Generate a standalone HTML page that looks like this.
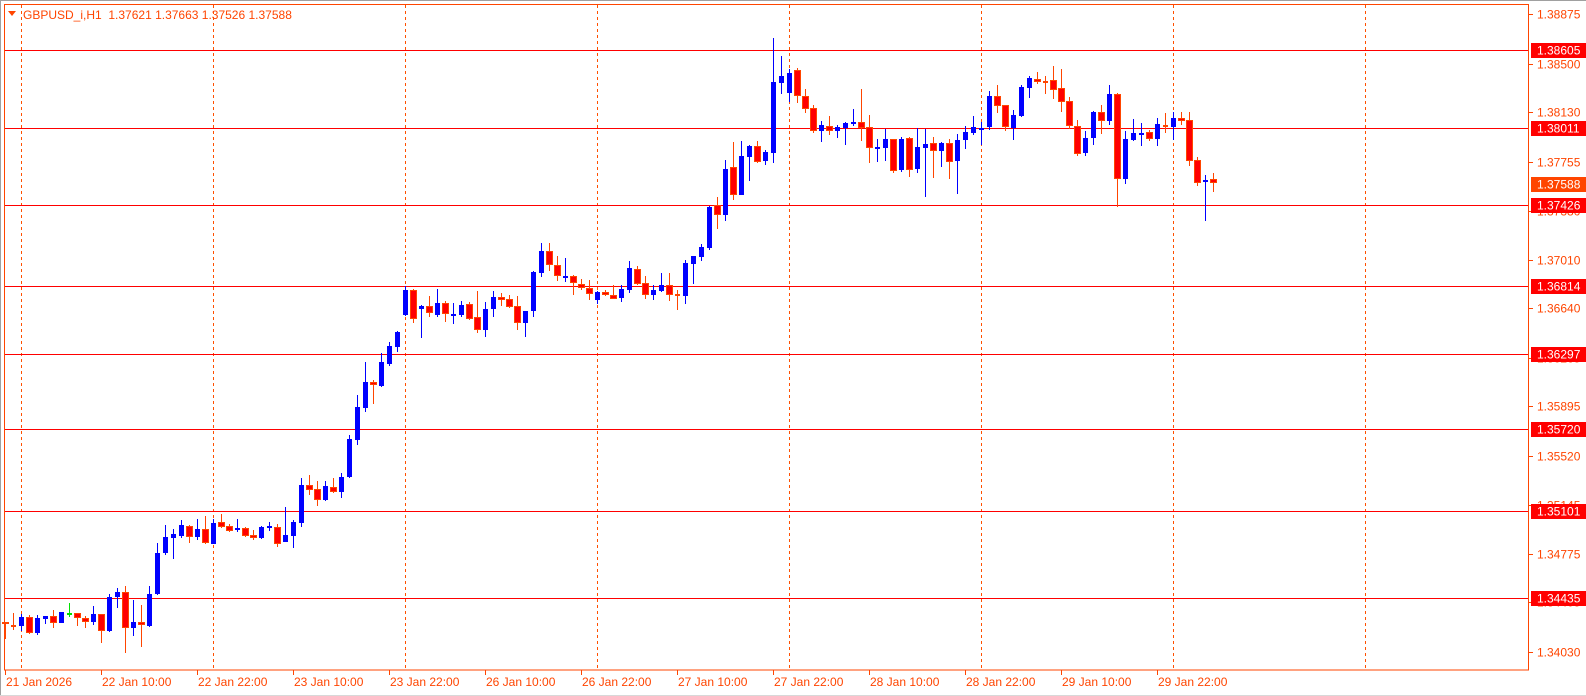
<!DOCTYPE html>
<html><head><meta charset="utf-8">
<style>
html,body{margin:0;padding:0;background:#fff;}
body{width:1586px;height:696px;overflow:hidden;position:relative;font-family:"Liberation Sans",sans-serif;}
svg{position:absolute;left:0;top:0;}
</style></head>
<body>
<svg id="s" width="1586" height="696" xmlns="http://www.w3.org/2000/svg" font-family="Liberation Sans, sans-serif">
<rect x="0" y="0" width="1586" height="696" fill="#fff"/>
<line x1="0" y1="0.5" x2="1586" y2="0.5" stroke="#a0a0a0"/>
<line x1="0.5" y1="0" x2="0.5" y2="696" stroke="#a0a0a0"/>
<line x1="0" y1="695.5" x2="1586" y2="695.5" stroke="#d8d8d8"/>
<g id="grid" stroke="#ff5000" stroke-dasharray="3,3" stroke-width="1"></g>
<g id="hl" stroke="#ff0000" stroke-width="1"></g>
<g id="c"></g>
<rect x="4.5" y="4.5" width="1524" height="665.5" fill="none" stroke="#ff4500" stroke-width="1"/>
<polygon points="8,11 16,11 12,16" fill="#ff4500"/>
<text x="23" y="19" font-size="12" fill="#ff4500" style="white-space:pre">GBPUSD_i,H1  1.37621 1.37663 1.37526 1.37588</text>
<g id="ax" font-size="12" fill="#ff4500"></g>
</svg>
<script>
var NS="http://www.w3.org/2000/svg";
function el(p,t,a,txt){var e=document.createElementNS(NS,t);for(var k in a)e.setAttribute(k,a[k]);if(txt!=null)e.textContent=txt;document.getElementById(p).appendChild(e);return e;}
[21,213,405,597,789,981,1173,1365].forEach(function(x){el('grid','line',{x1:x+.5,y1:5,x2:x+.5,y2:670});});
var Y=function(p){return 50+(1.38605-p)*13150;};
var lines=[1.38605,1.38011,1.37426,1.36814,1.36297,1.35720,1.35101,1.34435];
lines.forEach(function(p){var y=Math.round(Y(p))+.5;el('hl','line',{x1:5,y1:y,x2:1529,y2:y});});
var ticks=[1.38875,1.38500,1.38130,1.37755,1.37380,1.37010,1.36640,1.36265,1.35895,1.35520,1.35145,1.34775,1.34405,1.34030];
ticks.forEach(function(p){var y=Math.round(Y(p));el('ax','line',{x1:1529,y1:y+.5,x2:1533,y2:y+.5,stroke:'#ff4500'});el('ax','text',{x:1537,y:y+4.5},p.toFixed(5));});
lines.forEach(function(p){var y=Math.round(Y(p));el('ax','rect',{x:1531,y:y-7,width:55,height:15,fill:'#ff0000'});el('ax','text',{x:1537,y:y+4.5,fill:'#fff'},p.toFixed(5));});
(function(){var y=Math.round(Y(1.37588));el('ax','rect',{x:1531,y:y-7,width:55,height:15,fill:'#ff4500'});el('ax','text',{x:1537,y:y+4.5,fill:'#fff'},'1.37588');})();
var dl=['21 Jan 2026','22 Jan 10:00','22 Jan 22:00','23 Jan 10:00','23 Jan 22:00','26 Jan 10:00','26 Jan 22:00','27 Jan 10:00','27 Jan 22:00','28 Jan 10:00','28 Jan 22:00','29 Jan 10:00','29 Jan 22:00'];
dl.forEach(function(t,i){var x=5+96*i;el('ax','line',{x1:x+.5,y1:670,x2:x+.5,y2:675,stroke:'#ff4500'});el('ax','text',{x:x+1,y:686},t);});
var C=[
[5,'r',622,624,622,639],[13,'r',625,625,613,630],[21,'b',617,626,614,631],[29,'r',617,633,615,634],[37,'b',618,633,615,635],
[45,'b',616,619,616,624],[53,'r',616,623,610,628],[61,'b',612,623,612,623],[69,'g',613,613,603,617],[77,'r',613,618,613,626],
[85,'r',618,622,616,628],[93,'b',614,622,606,625],[101,'r',614,631,614,643],[109,'b',597,631,594,632],[117,'b',592,597,588,608],
[125,'r',592,628,586,653],[133,'b',622,628,600,636],[141,'r',622,625,605,647],[149,'b',594,626,586,627],[157,'b',553,594,543,595],
[165,'b',537,553,525,555],[173,'b',534,538,529,559],[181,'b',525,536,520,538],[189,'r',526,537,525,543],[197,'b',529,537,519,540],
[205,'r',529,543,516,544],[213,'b',523,544,519,544],[221,'r',522,527,514,528],[229,'r',526,531,524,532],[237,'b',528,530,519,532],
[245,'r',528,536,527,537],[253,'r',535,538,530,540],[261,'b',527,538,526,539],[269,'b',526,528,522,531],[277,'r',527,544,524,547],
[285,'b',535,542,507,542],[293,'b',522,536,520,548],[301,'b',485,523,478,527],[309,'r',485,490,475,495],[317,'r',489,500,481,506],
[325,'b',486,500,481,501],[333,'r',487,492,478,493],[341,'b',477,492,473,498],[349,'b',439,477,435,478],[357,'b',407,440,395,445],
[365,'b',382,408,362,412],[373,'r',382,385,380,404],[381,'b',362,386,353,387],[389,'b',346,364,342,366],[397,'b',332,347,331,352],
[405,'b',290,315,286,316],[413,'r',290,319,289,323],[421,'b',306,309,305,338],[429,'r',306,313,296,317],[437,'b',303,315,289,317],
[445,'r',303,314,301,322],[453,'b',314,314,303,324],[461,'b',305,315,301,317],[469,'r',304,319,302,320],[477,'r',317,330,291,333],
[485,'b',309,330,302,337],[493,'b',297,309,291,317],[501,'r',297,300,293,306],[509,'r',299,307,295,308],[517,'r',306,323,296,330],
[525,'b',311,323,311,337],[533,'b',272,311,271,317],[541,'b',251,273,243,277],[549,'r',251,265,243,271],[557,'r',265,276,256,281],
[565,'b',276,276,258,282],[573,'r',276,283,275,295],[581,'r',284,288,279,290],[589,'r',288,294,280,300],[597,'b',292,300,291,304],
[605,'r',292,295,290,296],[613,'r',295,299,285,299],[621,'b',289,298,285,302],[629,'b',268,290,261,293],[637,'r',269,284,266,285],
[645,'r',283,295,276,299],[653,'b',290,295,285,300],[661,'b',285,291,273,292],[669,'r',285,295,273,301],[677,'r',294,294,290,310],
[685,'b',263,296,260,304],[693,'b',256,264,256,284],[701,'b',247,257,244,261],[709,'b',207,248,206,250],[717,'r',205,215,197,229],
[725,'b',169,215,160,221],[733,'r',167,195,142,200],[741,'b',156,195,141,195],[749,'b',146,157,145,181],[757,'r',146,162,141,163],
[765,'b',152,161,150,165],[773,'b',82,153,38,163],[781,'b',76,83,56,94],[789,'b',73,93,69,102],[797,'r',70,96,68,103],
[805,'r',96,109,89,113],[813,'r',108,131,105,133],[821,'b',125,131,121,142],[829,'r',126,131,116,135],[837,'b',127,131,125,138],
[845,'b',123,128,122,145],[853,'b',122,124,109,126],[861,'r',122,128,89,141],[869,'r',127,148,115,163],[877,'b',147,147,139,162],
[885,'b',139,148,129,161],[893,'r',139,171,139,173],[901,'b',139,170,137,172],[909,'r',138,170,137,177],[917,'b',147,169,128,173],
[925,'b',144,148,129,197],[933,'r',143,151,137,178],[941,'b',143,151,142,167],[949,'r',143,162,139,179],[957,'b',140,161,134,194],
[965,'b',132,140,126,149],[973,'b',127,133,116,135],[981,'b',128,128,122,145],[989,'b',96,127,91,130],[997,'r',96,106,85,113],
[1005,'r',105,127,105,131],[1013,'b',115,128,110,140],[1021,'b',87,116,85,117],[1029,'b',78,88,76,98],[1037,'r',79,82,72,84],
[1045,'r',81,81,76,94],[1053,'r',80,90,66,99],[1061,'r',88,102,69,112],[1069,'r',101,126,97,129],[1077,'r',126,154,120,156],
[1085,'b',138,153,131,156],[1093,'b',112,138,111,145],[1101,'r',112,121,105,134],[1109,'b',94,121,85,125],[1117,'r',94,179,93,207],
[1125,'b',139,179,131,184],[1133,'b',133,140,119,141],[1141,'b',133,133,123,146],[1149,'r',132,139,130,141],[1157,'b',124,139,118,146],
[1165,'r',125,125,113,133],[1173,'b',118,127,112,140],[1181,'r',118,121,112,125],[1189,'r',120,161,112,166],[1197,'r',160,183,157,186],
[1205,'b',180,180,175,221],[1213,'r',179,183,173,192]
];
C.forEach(function(c){
 var x=c[0],t=c[1],bt=c[2],bb=c[3],wt=c[4],wb=c[5];
 var col=t=='b'?'#0000ff':(t=='g'?'#00e000':'#ff4500');
 el('c','rect',{x:x,y:wt,width:1,height:Math.max(1,wb-wt),fill:col});
 if(bb-bt<2){el('c','rect',{x:x-2,y:bt,width:5,height:2,fill:col});}
 else if(t=='b'){el('c','rect',{x:x-2,y:bt,width:5,height:bb-bt,fill:'#0000ff'});}
 else {el('c','rect',{x:x-2.5,y:bt+.5,width:6,height:bb-bt-1,fill:'#ff0000',stroke:'#ff4500','stroke-width':1});}
});
</script>
</body></html>
